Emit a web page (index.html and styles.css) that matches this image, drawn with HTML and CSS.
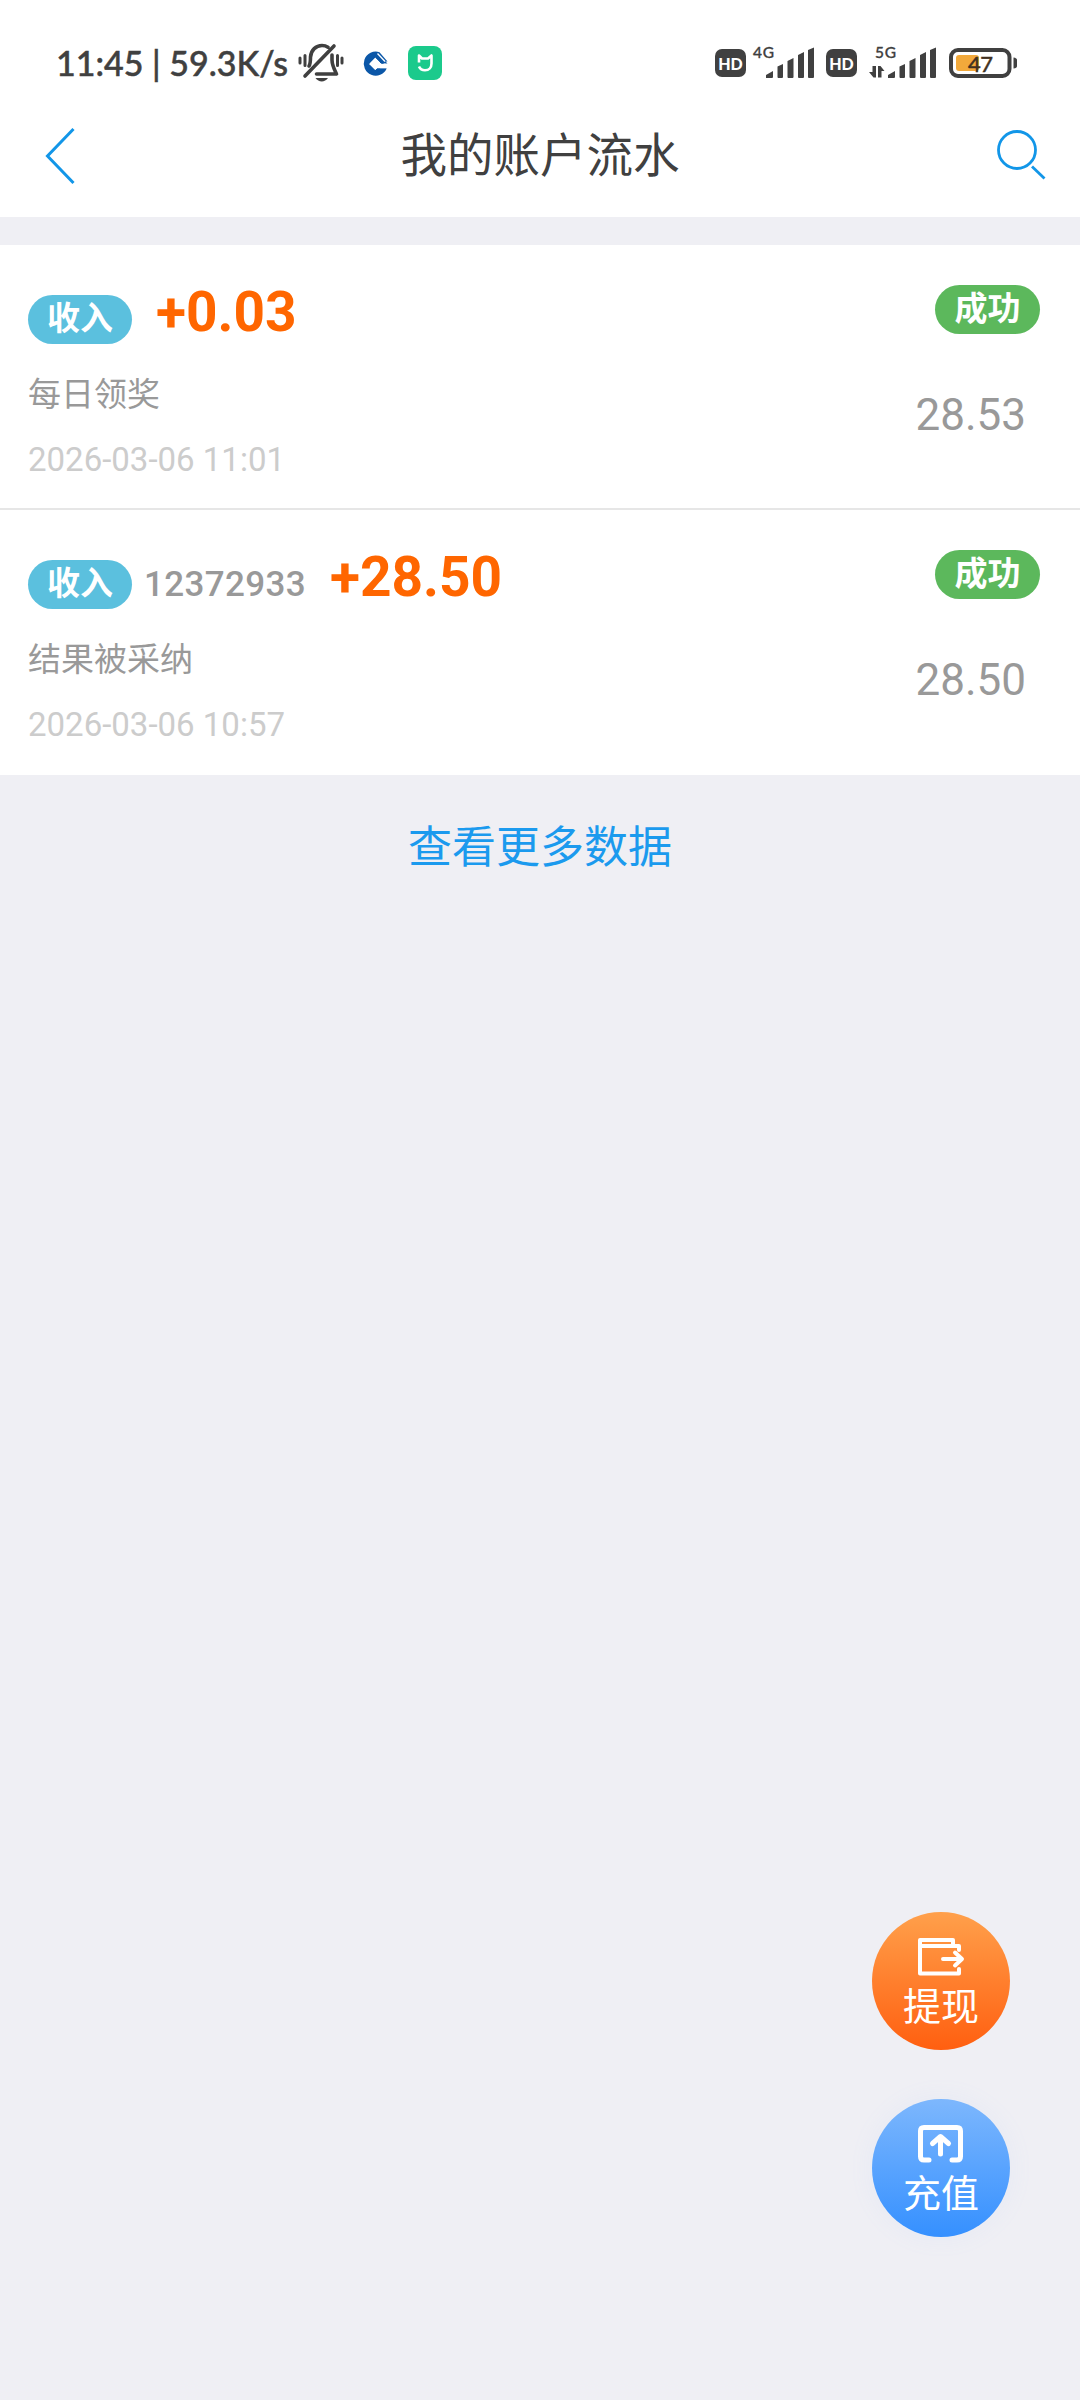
FILE: index.html
```html
<!DOCTYPE html>
<html lang="zh-CN">
<head>
<meta charset="utf-8">
<title>我的账户流水</title>
<link rel="stylesheet" href="styles.css">
</head>
<body>
<header class="header">
  <div class="status">
    <div class="status-left">
      <span class="clock">11:45 | 59.3K/s</span>
      <svg class="mute" width="46" height="40" viewBox="0 0 46 40" fill="none" stroke="#404040" stroke-width="3.6" stroke-linecap="round" stroke-linejoin="round">
        <path d="M11 23C12.500 21 12.500 19 12.500 14C13 7 18 2.500 24 2.500C26.500 2.500 28.500 3.200 30 4.200M34 12V17C34 22 36 26 38.500 31H18.500M36 3L7 33"/>
        <path d="M2 15V20M7 12.500V22.500M39.500 12.500V22.500M44 15V20" stroke-width="3"/>
        <path d="M17.500 35H30C27 39.500 20.500 39.500 17.500 35Z" fill="#404040" stroke="none"/>
      </svg>
      <svg class="bank" width="25" height="25" viewBox="0 0 25 25">
        <path d="M16.500 1.200A12 12 0 1 0 23.700 17.500H17L22 10.500H24.500Z" fill="#0b57a8"/>
        <path d="M12.300 6.800L18.300 12.800L25 13V17.500H14L12.300 19L6.300 13Z" fill="#fff"/>
        <path d="M14.500 13.500L18 12.200L24.500 12.500L22 10L17 10.500ZM12.300 19L13.800 17.500H23.700L20 21H12Z" fill="#0b57a8"/>
        <path d="M12.300 7.300L17.900 12.900L12.300 18.500L6.700 12.900Z" fill="#fff" stroke="#fff"/>
        <path d="M14.500 2.500L22 10.500" stroke="#fff" stroke-width="1.300"/>
      </svg>
      <svg class="mijia" width="34" height="34" viewBox="0 0 34 34">
        <rect width="34" height="34" rx="8" fill="#1bca8c"/>
        <path d="M11 16.500V9.500L14 12.500H20L23.500 9.500V17.500C23.500 21.500 21 24.300 17 24.300C14 24.300 12 22.800 11 20.500" fill="none" stroke="#fff" stroke-width="2.600" stroke-linejoin="round"/>
      </svg>
    </div>
    <div class="status-right">
      <span class="hd">HD</span>
      <svg class="signal" width="62" height="36" viewBox="0 0 62 36" fill="#404040">
        <text class="net" x="0" y="14" textLength="21">4G</text>
        <path d="M13 34V31L20 27V33Q20 34 19 34ZM24.500 33V22.500L30 20V33Q30 34 29 34H25.500Q24.500 34 24.500 33ZM34.500 33V17L40.500 14V33Q40.500 34 39.500 34H35.500Q34.500 34 34.500 33ZM45 33V11L51 8V33Q51 34 50 34H46Q45 34 45 33ZM55 33V6L61 3.500V33Q61 34 60 34H56Q55 34 55 33Z"/>
      </svg>
      <span class="hd hd-second">HD</span>
      <svg class="signal signal-second" width="68" height="36" viewBox="-6 0 68 36" fill="#404040">
        <text class="net" x="0" y="14" textLength="21">5G</text>
        <path d="M-6 28L-2.500 28V22H1V33.500H-1.500ZM3 33.500V22H5.500L9.500 27H6.500V33.500Z"/>
        <path d="M13 34V31L20 27V33Q20 34 19 34ZM24.500 33V22.500L30 20V33Q30 34 29 34H25.500Q24.500 34 24.500 33ZM34.500 33V17L40.500 14V33Q40.500 34 39.500 34H35.500Q34.500 34 34.500 33ZM45 33V11L51 8V33Q51 34 50 34H46Q45 34 45 33ZM55 33V6L61 3.500V33Q61 34 60 34H56Q55 34 55 33Z"/>
      </svg>
      <svg class="battery" width="69" height="30" viewBox="0 0 69 30">
        <rect x="2" y="2" width="58.500" height="26" rx="7" fill="none" stroke="#404040" stroke-width="4"/>
        <rect x="7" y="7" width="23" height="16" rx="3" fill="#f2a93b"/>
        <path d="M64.500 9.500Q68 10 68 12V18Q68 20 64.500 20.500Z" fill="#404040"/>
        <text class="level" x="19" y="23.500" textLength="25">47</text>
      </svg>
    </div>
  </div>
  <nav class="nav">
    <svg width="32" height="58" viewBox="0 0 32 58" fill="none" stroke="#1296e8" stroke-width="3"><path d="M29.500 2L3.500 29L29.500 56"/></svg>
    <h1 class="title">我的账户流水</h1>
    <svg width="52" height="52" viewBox="0 0 52 52" fill="none" stroke="#1296e8" stroke-width="2.800"><circle cx="22" cy="20" r="18.500"/><path d="M37 36.500L49.500 48.500"/></svg>
  </nav>
</header>
<main>
  <ul class="records">
    <li class="record">
      <div class="info">
        <div class="headline"><span class="pill income">收入</span><span class="amount">+0.03</span></div>
        <p class="desc">每日领奖</p>
        <time class="time">2026-03-06 11:01</time>
      </div>
      <div class="result"><span class="pill success">成功</span><span class="balance">28.53</span></div>
    </li>
    <li class="record">
      <div class="info">
        <div class="headline"><span class="pill income">收入</span><span class="order">12372933</span><span class="amount">+28.50</span></div>
        <p class="desc">结果被采纳</p>
        <time class="time">2026-03-06 10:57</time>
      </div>
      <div class="result"><span class="pill success">成功</span><span class="balance">28.50</span></div>
    </li>
  </ul>
  <a class="more">查看更多数据</a>
</main>
<aside class="actions">
  <a class="action withdraw">
    <svg width="48" height="40" viewBox="0 0 48 40" fill="none" stroke="#fff" stroke-width="4" stroke-linecap="round" stroke-linejoin="round">
      <path d="M42 13V9H3M36 8V3H3V36.500H42V32"/><path d="M26 22H44M38 15.500L45 22L38 28.500"/>
    </svg>
    <span>提现</span>
  </a>
  <a class="action recharge">
    <svg width="48" height="40" viewBox="0 0 48 40" fill="none" stroke="#fff" stroke-width="5" stroke-linecap="round" stroke-linejoin="round">
      <path d="M12 36H7Q3.500 36 3.500 32.500V7Q3.500 3.500 7 3.500H40Q43.500 3.500 43.500 7V32.500Q43.500 36 40 36H35"/><path d="M23.500 30V13M15.500 19.500L23.500 12.500L31.500 19.500"/>
    </svg>
    <span>充值</span>
  </a>
</aside>
</body>
</html>
```
FILE: styles.css
```css
* { box-sizing: border-box; }
body {
  margin: 0;
  min-height: 2400px;
  position: relative;
  background: #efeff4;
  font-family: Roboto, "Noto Sans CJK SC", sans-serif;
  color: #999;
}
svg { display: block; flex: none; overflow: visible; }
.header { height: 217px; background: #fff; }
.status {
  height: 110px;
  padding: 16px 62px 0 56px;
  display: flex;
  justify-content: space-between;
  align-items: center;
  color: #404040;
}
.status-left, .status-right { display: flex; align-items: center; }
.clock {
  width: 240px;
  font: 500 34px/40px Lato, sans-serif;
  -webkit-text-stroke: 0.5px #404040;
  white-space: nowrap;
}
.mute { margin-left: 2px; }
.bank { margin-left: 19px; }
.mijia { margin-left: 20px; }
.hd {
  width: 31px;
  height: 28px;
  border-radius: 7px;
  background: #404040;
  color: #fff;
  font: 900 16px/29px Lato, sans-serif;
  text-align: center;
}
.signal { margin: 0 0 2px 7px; }
.hd-second { margin-left: 11px; }
.signal-second { margin-left: 12px; }
.net { font: 500 15.5px Lato, sans-serif; stroke: #404040; stroke-width: 0.3px; }
.battery { margin-left: 12px; }
.level { font: 400 22px Lato, sans-serif; fill: #403020; stroke: #403020; stroke-width: 0.5px; }
.nav {
  height: 92px;
  padding: 0 33px 0 44px;
  display: flex;
  justify-content: space-between;
  align-items: center;
}
.title {
  margin: 0 0 0 9px;
  font-size: 46.5px;
  line-height: 91px;
  font-weight: 400;
  color: #404040;
}
.records { list-style: none; margin: 28px 0 0; padding: 0; background: #fff; }
.record {
  height: 265px;
  padding: 0 40px 0 28px;
  display: flex;
  justify-content: space-between;
}
.record:first-child { border-bottom: 2px solid #e6e6e6; }
.info { padding-top: 37px; }
.headline {
  height: 61px;
  display: flex;
  align-items: baseline;
  line-height: 60px;
  font-weight: 700;
}
.pill {
  height: 49px;
  border-radius: 25px;
  color: #fff;
  font-size: 33px;
  line-height: 48px;
  font-weight: 700;
  text-align: center;
}
.income { width: 104px; background: #5bc0de; position: relative; top: -1px; }
.success { width: 105px; background: #5cb85c; }
.order { margin-left: 12px; font-size: 35px; font-weight: 500; letter-spacing: 0.35px; }
.amount { margin-left: 24px; font-size: 55px; color: #f60; }
.desc { margin: 30px 0 21px; font-size: 33px; line-height: 44px; }
.time { display: block; font-size: 33px; line-height: 44px; color: #ccc; }
.result {
  padding-top: 40px;
  display: flex;
  flex-direction: column;
  align-items: flex-end;
  gap: 56px;
}
.balance { margin-right: 14px; font-size: 44px; line-height: 50px; }
.more {
  display: block;
  margin-top: 38px;
  text-align: center;
  font-size: 44px;
  line-height: 70px;
  color: #1b9aee;
}
.actions {
  position: absolute;
  right: 70px;
  top: 1912px;
  display: flex;
  flex-direction: column;
  gap: 49px;
}
.action {
  width: 138px;
  height: 138px;
  padding-top: 25px;
  border-radius: 50%;
  display: flex;
  flex-direction: column;
  align-items: center;
  color: #fff;
  font-size: 38px;
  line-height: 50px;
}
.action span { margin-top: 5px; }
.withdraw { background: linear-gradient(#ffa04b, #ff5f10); }
.recharge { background: linear-gradient(#7db7fd, #3590ff); box-shadow: 0 0 20px 6px rgba(130, 180, 255, 0.05); }
```
